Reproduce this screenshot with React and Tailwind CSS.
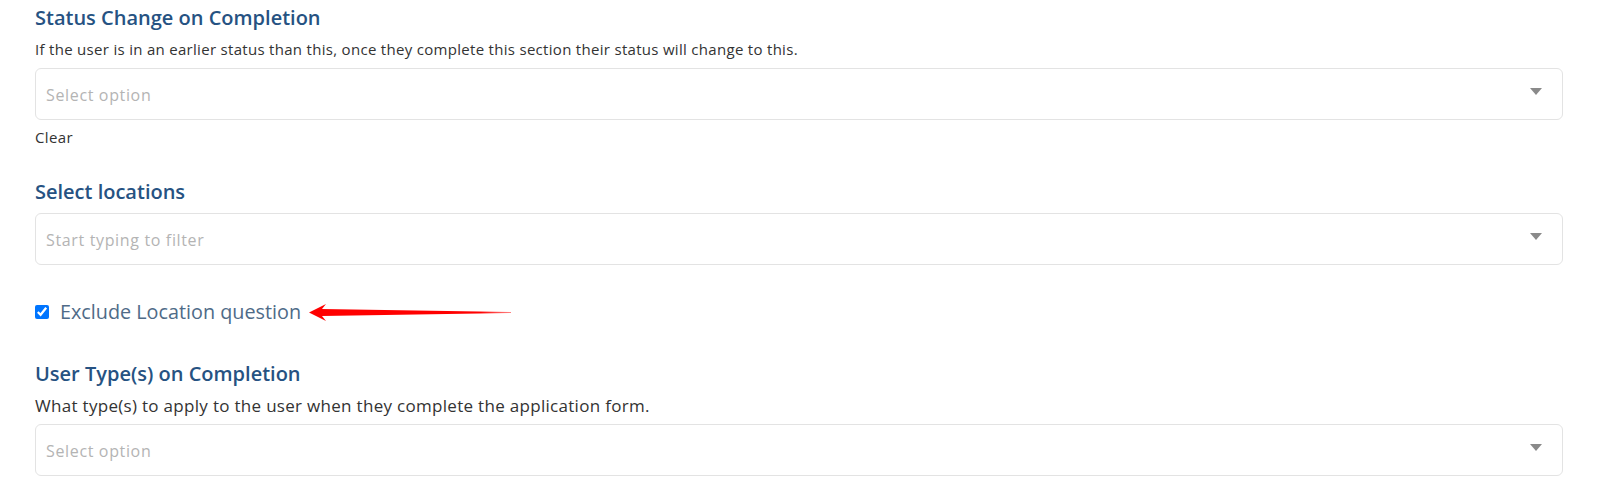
import React from 'react';

const font = { fontFamily: '"Open Sans", "Noto Sans", sans-serif' };

function Caret() {
  return (
    <svg width="12" height="7" viewBox="0 0 12 7" className="mt-[-5px]">
      <polygon points="0,0 12,0 6,7" fill="#8a8a8a" />
    </svg>
  );
}

function SelectBox({ placeholder, className = '' }) {
  return (
    <div
      className={`flex h-[52px] items-center justify-between rounded-[6px] border border-[#e3e3e3] bg-white pl-[10px] pr-[20px] ${className}`}
    >
      <span className="mt-[2px] text-[16px] tracking-[0.65px] text-[#b4b4b4]">{placeholder}</span>
      <Caret />
    </div>
  );
}

function Arrow() {
  return (
    <svg width="202" height="17" viewBox="0 0 202 17" className="ml-[8px] mt-[1px]">
      <defs>
        <linearGradient id="fade" x1="0" x2="1" y1="0" y2="0">
          <stop offset="0" stopColor="#ff0000" />
          <stop offset="0.85" stopColor="#ff0000" />
          <stop offset="1" stopColor="#ff3030" stopOpacity="0.6" />
        </linearGradient>
      </defs>
      <polygon points="0,8.5 17,0 13,5 202,8 202,9 13,12 17,17" fill="url(#fade)" />
    </svg>
  );
}

export default function App() {
  return (
    <div className="min-h-[486px] w-full bg-white px-[35px] pt-[4px] text-[#333]" style={font}>
      <h3 className="text-[20px] leading-[28px] font-semibold text-[#265282]">Status Change on Completion</h3>
      <p className="mt-[7px] text-[15px] leading-[20px] tracking-[0.3px] text-[#333]">
        If the user is in an earlier status than this, once they complete this section their status will change to this.
      </p>
      <SelectBox placeholder="Select option" className="mt-[9px]" />
      <p className="mt-[7px] text-[15px] leading-[20px] tracking-[0.4px] text-[#333]">Clear</p>

      <h3 className="mt-[31px] text-[20px] leading-[28px] font-semibold text-[#265282]">Select locations</h3>
      <SelectBox placeholder="Start typing to filter" className="mt-[7px]" />

      <div className="mt-[33px] flex h-[28px] items-center">
        <input type="checkbox" defaultChecked className="m-0 h-[14px] w-[14px] accent-[#0075ff]" />
        <label className="ml-[11px] text-[19.8px] leading-[28px] text-[#4f6b88]">Exclude Location question</label>
        <Arrow />
      </div>

      <h3 className="mt-[34px] text-[20px] leading-[28px] font-semibold text-[#265282]">User Type(s) on Completion</h3>
      <p className="mt-[8px] text-[17px] leading-[20px] tracking-[0.3px] text-[#333]">
        What type(s) to apply to the user when they complete the application form.
      </p>
      <SelectBox placeholder="Select option" className="mt-[8px]" />
    </div>
  );
}
